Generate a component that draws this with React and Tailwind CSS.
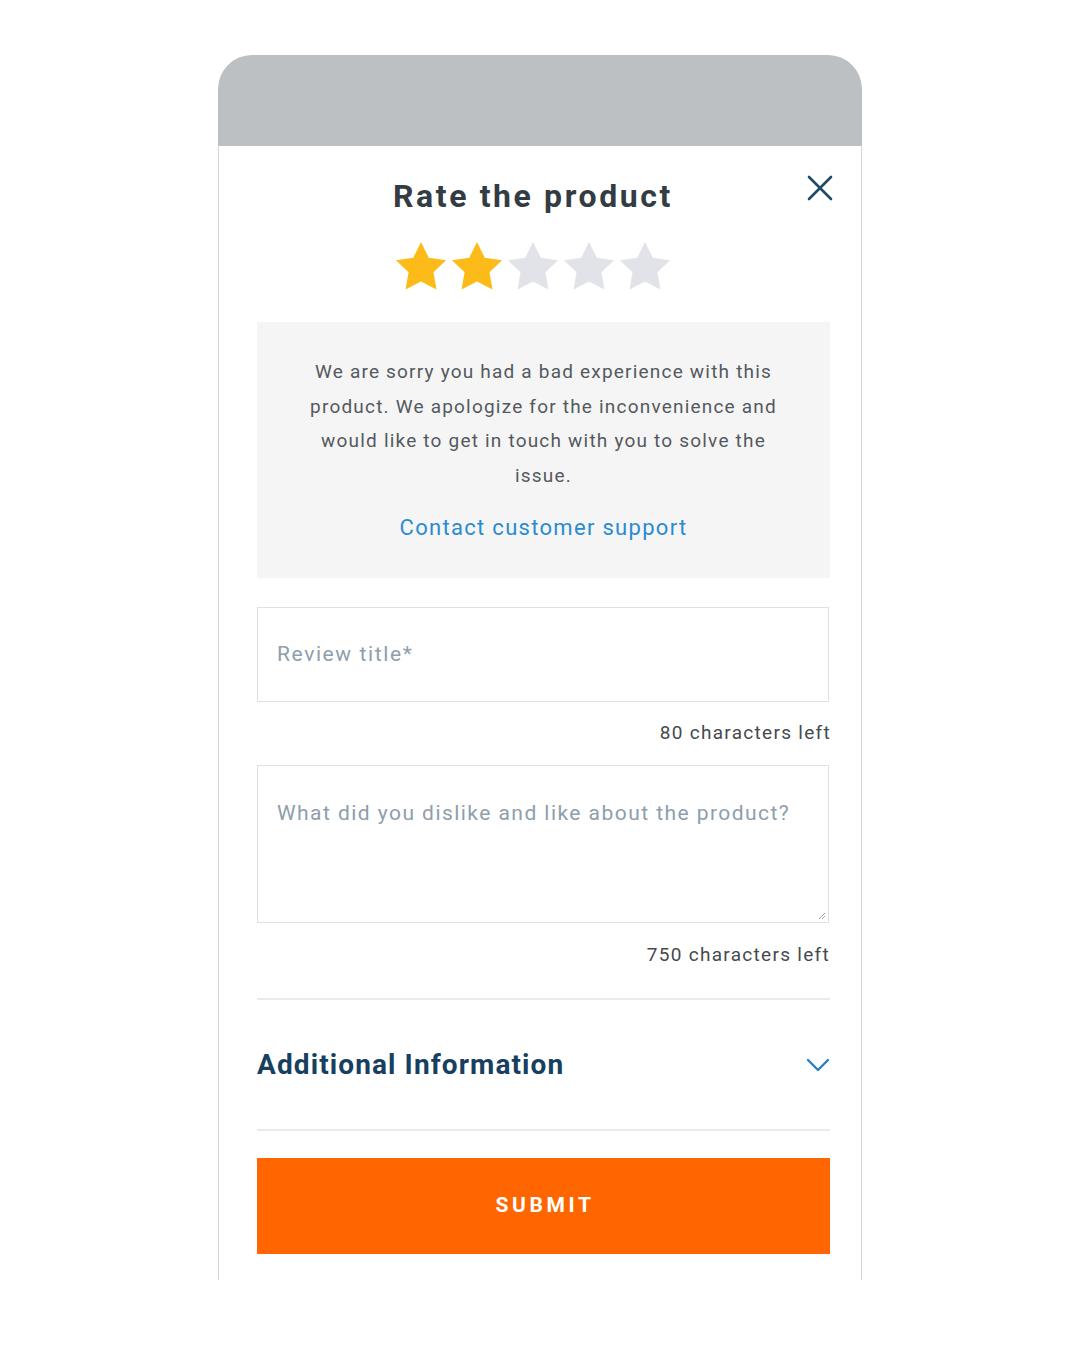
import React from "react";

const STAR = "M12 2l3.09 6.26L22 9.27l-5 4.87 1.18 6.88L12 17.77l-6.18 3.25L7 14.14 2 9.27l6.91-1.01L12 2z";

function Star({ filled }) {
  return (
    <svg viewBox="2 2 20 19.2" width="50" height="48" className="block">
      <path d={STAR} fill={filled ? "#fcbb19" : "#e1e3e9"} />
    </svg>
  );
}

export default function App() {
  return (
    <div
      className="min-h-[1350px] w-full bg-white flex justify-center pt-[55px]"
      style={{ fontFamily: "Roboto, 'Noto Sans', sans-serif" }}
    >
      <div className="w-[644px] h-[1225px] rounded-t-[34px] overflow-hidden flex flex-col">
        <div className="h-[91px] bg-[#bdc0c3] shrink-0" />
        <div className="flex-1 border-x border-[#d3d5d8] pl-[38px] pr-[31px] pb-[25px] flex flex-col">
          {/* header */}
          <div className="flex pt-[30px]">
            <div className="flex-1 flex flex-col items-center">
              <h1 className="text-[32px] leading-[40px] font-bold text-[#343c43] tracking-[2.6px]">
                Rate the product
              </h1>
              <div className="flex gap-[6px] mt-[26px]">
                <Star filled />
                <Star filled />
                <Star />
                <Star />
                <Star />
              </div>
            </div>
            <button className="w-[26px] h-[26px] mt-[-1px] ml-[-2px] mr-[-3px] shrink-0">
              <svg viewBox="0 0 26 26" width="26" height="26">
                <path d="M2 2L24 24M24 2L2 24" stroke="#1f4b69" strokeWidth="2.6" strokeLinecap="round" fill="none" />
              </svg>
            </button>
          </div>

          {/* apology box */}
          <div className="mt-[32px] bg-[#f5f5f5] px-[52px] pt-[33px] pb-[37px] flex flex-col items-center text-center">
            <p className="text-[19px] leading-[34.5px] text-[#54595e] tracking-[1.2px]">
              We are sorry you had a bad experience with this product. We apologize for the inconvenience and would like to get in touch with you to solve the issue.
            </p>
            <a className="mt-[22px] text-[22px] leading-[26px] text-[#2a8bd0] tracking-[1.3px]">
              Contact customer support
            </a>
          </div>

          {/* review title */}
          <div className="mt-[29px] h-[95px] border border-[#dde2e8] flex items-center pl-[19px] mr-[1px]">
            <span className="text-[21px] text-[#8d9eac] tracking-[1.6px]">Review title*</span>
          </div>
          <div className="mt-[19px] text-right text-[19px] leading-[24px] text-[#464a4e] tracking-[1.3px] mr-[-1px]">80 characters left</div>

          {/* textarea */}
          <div className="mt-[20px] h-[158px] border border-[#dde2e8] relative pl-[19px] pt-[34px] mr-[1px]">
            <span className="text-[21px] leading-[26px] text-[#8d9eac] tracking-[1.45px]">What did you dislike and like about the product?</span>
            <svg className="absolute right-[2px] bottom-[2px]" width="9" height="9" viewBox="0 0 9 9">
              <path d="M8 2L2 8M8 5L5 8" stroke="#9aa0a6" strokeWidth="1" />
            </svg>
          </div>
          <div className="mt-[20px] text-right text-[19px] leading-[24px] text-[#464a4e] tracking-[1.3px]">750 characters left</div>

          {/* additional info */}
          <div className="mt-[31px] border-t-2 border-[#e8eaee] border-b-2 h-[133px] flex items-center justify-between">
            <span className="text-[28px] font-bold text-[#183f5f] tracking-[1.1px]">Additional Information</span>
            <svg width="24" height="14" viewBox="0 0 24 14">
              <path d="M2 2L12 12L22 2" stroke="#2b7fc1" strokeWidth="2.4" fill="none" strokeLinecap="round" strokeLinejoin="round" />
            </svg>
          </div>

          {/* submit */}
          <button className="mt-[27px] h-[96px] bg-[#ff6600] w-[573px] flex items-center justify-center">
            <span className="text-white text-[21px] font-bold tracking-[3.6px] pl-[3px]">SUBMIT</span>
          </button>
        </div>
      </div>
    </div>
  );
}
